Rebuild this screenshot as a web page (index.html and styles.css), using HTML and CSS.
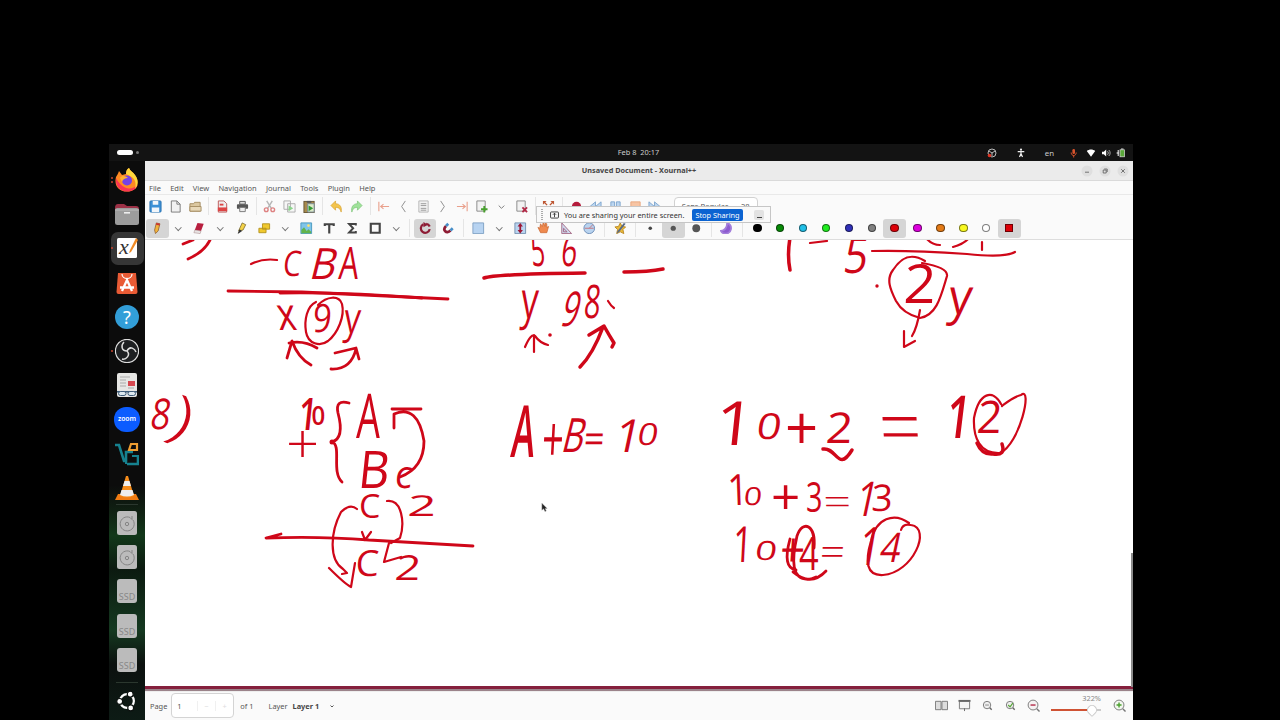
FILE: index.html
```html
<!DOCTYPE html>
<html lang="en">
<head>
    <meta charset="UTF-8">
    <meta name="viewport" content="width=device-width, initial-scale=1.0">
    <title>Unsaved Document - Xournal++</title>
    <link rel="stylesheet" href="styles.css">
</head>
<body>
    <div class="screen">
        <header class="topbar">
            <div class="workspace"><i class="pill"></i><i class="dot"></i></div>
            <div class="clock">Feb 8&nbsp; 20:17</div>
            <div class="tray">
                <svg class="tray-obs" viewBox="0 0 10 10"><circle cx="5" cy="5" r="4" fill="none" stroke="#bbb"/><path d="M5 5L2 3M5 5L8 3M5 5v3" stroke="#bbb"/><circle cx="2.5" cy="7.5" r="1.8" fill="#d32"/></svg>
                <svg class="tray-access" viewBox="0 0 10 10"><circle cx="5" cy="1.7" r="1.1" fill="#eee"/><path d="M1.7 3.7h6.6M5 3.5v3M5 5.5L3.5 9M5 5.5L6.5 9" stroke="#eee" stroke-width="1.2"/></svg>
                <span class="lang">en</span>
                <svg class="tray-mic" viewBox="0 0 10 10"><rect x="3.4" y="1" width="2.6" height="5" rx="1.3" fill="#d9532c"/><path d="M2.2 4.5c0 4 5 4 5 0M4.7 7.5v2" fill="none" stroke="#d9532c"/></svg>
                <svg class="tray-wifi" viewBox="0 0 10 10"><path d="M.8 3C3.2 1 6.8 1 9.2 3L5 8.8z" fill="#fff"/></svg>
                <svg class="tray-volume" viewBox="0 0 10 10"><path d="M1 3.7h1.8L5.2 1.6v6.8L2.8 6.3H1z" fill="#fff"/><path d="M6.5 3.2c1 1 1 2.6 0 3.6M7.8 2c1.8 1.7 1.8 4.3 0 6" fill="none" stroke="#ccc" stroke-width=".8"/></svg>
                <svg class="tray-battery" viewBox="0 0 10 10"><path d="M2.2 2v6M.6 5h2" stroke="#fff"/><rect x="4" y="1.8" width="4.5" height="7" fill="#5aa83a" stroke="#ddd" stroke-width=".7"/><path d="M5 1h2.5" stroke="#ddd"/></svg>
            </div>
        </header>

        <div class="desktop">
            <nav class="dock">
                <div class="app running two"><svg viewBox="0 0 24 24"><path d="M14 0c1 3 4 4 6 7 6 8 1 16.500-8 16.500S-1 17 1 9c1-2 2-3 3-6l3 4 4-1c0-3 1-5 3-6z" fill="#ff8a22"/><path d="M1 10c-1 8 4 13.500 11 13.500 5 0 9-2 11-7-4 4-9 5-13 3S3 14 1 10z" fill="#fb3553"/><path d="M14 0c1 3 4 4 6 7 4 5 3 11 0 14 1-4 1-8-2-11-2-2-5-3-7-4 0-3 1-5 3-6z" fill="#ffd83c"/><circle cx="12" cy="12.500" r="5" fill="#7542e5"/><path d="M5 10c2-3 6-2 8 0-3 0-5 1-6 4z" fill="#ffb130"/></svg></div>
                <div class="app"><svg viewBox="0 0 24 24"><path d="M0 6q0-4 3-4h6l3 2h9q3 0 3 3v5H0z" fill="#9c3146"/><rect y="6" width="24" height="17" rx="2.5" fill="#9c9c9c"/><path d="M0 8h24" stroke="#bbb"/><rect x="9" y="10" width="6" height="1.6" fill="#eee"/></svg></div>
                <div class="app running active"><svg viewBox="0 0 24 24"><rect x="2" y="2" width="20" height="20" rx="1.5" fill="#fff"/><text x="4" y="18" class="xicon">x</text><path d="M21 2l2 2-7 12-2 1 1-3z" fill="#f08a24"/></svg></div>
                <div class="app"><svg viewBox="0 0 24 24"><path d="M3 2h18l1.5 19q0 2-2 2h-17q-2 0-2-2z" fill="#e95b35"/><path d="M7 3c0 6 10 6 10 0" fill="none" stroke="#fff" stroke-width="1.2"/><path d="M7 20l5-11 5 11M5 16.5h14" fill="none" stroke="#fff" stroke-width="2.3"/></svg></div>
                <div class="app"><svg viewBox="0 0 24 24"><circle cx="12" cy="12" r="12" fill="#329ed8"/><text x="12" y="18.5" class="help">?</text></svg></div>
                <div class="app running"><svg viewBox="0 0 24 24"><circle cx="12" cy="12" r="11.6" fill="#1e2022" stroke="#ddd" stroke-width="1.2"/><path d="M12 12C6 12 6 6 9 3M12 12c3-6 8-2 9 1M12 12c4 4-1 9-5 8" fill="none" stroke="#ddd" stroke-width="1.5"/></svg></div>
                <div class="app"><svg viewBox="0 0 24 24"><rect x="2" width="20" height="24" rx="2" fill="#e6e6e4"/><path d="M5 4h10M5 7h6M5 10h6M5 13h6M13 15h6" stroke="#aaa"/><rect x="13" y="8" width="7" height="5" fill="#d64850"/><path d="M2 18h20v1.500H2z" fill="#3f5d7a"/><rect x="3.500" y="18.5" width="7.500" height="4" rx="2" fill="#dde8ee" stroke="#3f5d7a"/><rect x="13" y="18.5" width="7.500" height="4" rx="2" fill="#dde8ee" stroke="#3f5d7a"/></svg></div>
                <div class="app"><div class="zoom-logo">zoom</div></div>
                <div class="app"><svg viewBox="0 0 24 24"><path d="M0 3h4l5 16h2V10h7M23 13v9H12" fill="none" stroke="#16818f" stroke-width="2.6"/><path d="M17 14h6v8M11 19v3" fill="none" stroke="#16818f" stroke-width="2"/><path d="M14 8l2-6h6v6z" fill="none" stroke="#ee9d31" stroke-width="2.2"/></svg></div>
                <div class="app"><svg viewBox="0 0 24 24"><path d="M3 18h18l3 6H0z" fill="#f07c13"/><path d="M11 0h2l6 20q-7 3-14 0z" fill="#f58c1b"/><path d="M9.5 5h5l1.5 5H8zM6.5 14h11l1.5 5q-7 3-14 0z" fill="#eee"/></svg></div>
                <hr>
                <div class="app"><svg viewBox="0 0 24 24"><rect x="2" width="20" height="24" rx="2.5" fill="#bbb"/><path d="M18 9a7 7 0 1 1-3-2.5l2 2V5" fill="none" stroke="#858585"/><circle cx="12" cy="13" r="1.7" fill="none" stroke="#858585"/></svg></div>
                <div class="app"><svg viewBox="0 0 24 24"><rect x="2" width="20" height="24" rx="2.5" fill="#bbb"/><path d="M18 9a7 7 0 1 1-3-2.5l2 2V5" fill="none" stroke="#858585"/><circle cx="12" cy="13" r="1.7" fill="none" stroke="#858585"/></svg></div>
                <div class="app"><div class="ssd">SSD</div></div>
                <div class="app"><div class="ssd">SSD</div></div>
                <div class="app"><div class="ssd">SSD</div></div>
                <hr class="last">
                <div class="app ubuntu"><svg viewBox="0 0 24 24"><circle cx="12" cy="12" r="7.5" fill="none" stroke="#fff" stroke-width="2.4"/><g fill="#fff" stroke="#0c110f" stroke-width="1.3"><circle cx="4" cy="12.5" r="3.2"/><circle cx="15.5" cy="4.5" r="3.2"/><circle cx="16" cy="19.5" r="3.2"/></g></svg></div>
            </nav>

            <main class="window">
                <div class="titlebar">
                    <div class="title">Unsaved Document - Xournal++</div>
                    <div class="win-buttons">
                        <svg viewBox="0 0 12 12"><circle cx="6" cy="6" r="5.5"/><path d="M4 7.2h4"/></svg>
                        <svg viewBox="0 0 12 12"><circle cx="6" cy="6" r="5.5"/><path d="M4.2 5h3v3h-3zM5.2 4h3v3"/></svg>
                        <svg viewBox="0 0 12 12"><circle cx="6" cy="6" r="5.5"/><path d="M4.2 4.2l3.6 3.6M7.8 4.2L4.2 7.8"/></svg>
                    </div>
                </div>

                <div class="menubar">
                    <span>File</span><span>Edit</span><span>View</span><span>Navigation</span><span>Journal</span><span>Tools</span><span>Plugin</span><span>Help</span>
                </div>

                <div class="toolbar main-tools">
                    <b><svg viewBox="0 0 14 14"><rect x="1" y="1" width="12" height="12" rx="1" fill="#3d91d6" stroke="#2871b0"/><path d="M4 1h6v4H4zM3 8h8v5H3z" fill="#f2f6fa"/></svg></b>
                    <b><svg viewBox="0 0 14 14"><path d="M2.5 1h6l3.5 3.5V13h-9.500z" fill="#f1f1f1" stroke="#777"/><path d="M8.500 1v3.500H12" fill="none" stroke="#777"/></svg></b>
                    <b><svg viewBox="0 0 14 14"><path d="M1 12V4h4l1-1.500h6V12z" fill="#dcc8a0" stroke="#a58c61"/><path d="M1 12V7h12v5z" fill="#e8d8b8" stroke="#a58c61"/></svg></b>
                    <i class="sep"></i>
                    <b><svg viewBox="0 0 14 14"><path d="M2.500 1h6l3 3v9h-9z" fill="#eee" stroke="#b55"/><path d="M2 8h10v4H2z" fill="#d44"/><path d="M4 4h4v2H4z" fill="#d44"/></svg></b>
                    <b><svg viewBox="0 0 14 14"><path d="M4 1.500h6v3H4z" fill="#ddd" stroke="#555"/><rect x="1" y="4.500" width="12" height="5" rx="1" fill="#555"/><path d="M4 8h6v4.500H4z" fill="#eee" stroke="#777"/></svg></b>
                    <i class="sep"></i>
                    <b><svg class="faded" viewBox="0 0 14 14"><path d="M4 1l5 8M10 1L5 9" stroke="#888" stroke-width="1.500"/><circle cx="3.500" cy="10.500" r="2" fill="none" stroke="#c33" stroke-width="1.500"/><circle cx="10.500" cy="10.500" r="2" fill="none" stroke="#c33" stroke-width="1.500"/></svg></b>
                    <b><svg class="faded" viewBox="0 0 14 14"><path d="M1 1h7v9H1zM5 4h8v9H5z" fill="#f5f5f5" stroke="#777"/><path d="M6 6l5 3-5 3z" fill="#4b4"/></svg></b>
                    <b><svg viewBox="0 0 14 14"><rect x="1" y="1.500" width="11" height="12" fill="#a88b4c" stroke="#665534"/><path d="M4 1h5v2H4z" fill="#555"/><path d="M5 4h7v9H5z" fill="#dceac7" stroke="#789"/><path d="M6 6l5 3-5 3z" fill="#393"/></svg></b>
                    <i class="sep"></i>
                    <b><svg viewBox="0 0 14 14"><path d="M1 6l5-5v3c5 0 7 4 6 9-1-4-3-5-6-5v3z" fill="#f3c44d" stroke="#d59e27" stroke-width=".7"/></svg></b>
                    <b><svg viewBox="0 0 14 14"><path d="M13 6L8 1v3c-5 0-7 4-6 9 1-4 3-5 6-5v3z" fill="#9fe29a" stroke="#74c06f" stroke-width=".7"/></svg></b>
                    <i class="sep"></i>
                    <b><svg viewBox="0 0 14 14"><path d="M2 2v10M13 7H4M7 4.500L4 7l3 2.500" fill="none" stroke="#e9a08c" stroke-width="1.200"/></svg></b>
                    <b><svg viewBox="0 0 14 14"><path d="M9 1L5 7l4 6" fill="none" stroke="#888"/></svg></b>
                    <b><svg class="faded" viewBox="0 0 14 14"><path d="M2 1h10v12H2z" fill="#eee" stroke="#888"/><path d="M4 4h6M4 6h6M4 9h6M4 11h6" stroke="#555"/></svg></b>
                    <b><svg viewBox="0 0 14 14"><path d="M5 1l4 6-4 6" fill="none" stroke="#888"/></svg></b>
                    <b><svg viewBox="0 0 14 14"><path d="M12 2v10M1 7h9M7 4.500L10 7 7 9.500" fill="none" stroke="#e9a08c" stroke-width="1.200"/></svg></b>
                    <b><svg viewBox="0 0 14 14"><path d="M2 1h9v11H2z" fill="#f2f2f2" stroke="#888"/><path d="M10 6.500v7M6.500 10h7" stroke="#47a02c" stroke-width="2"/></svg></b>
                    <b><svg viewBox="0 0 14 14"><path d="M4 6l3 3 3-3" fill="none" stroke="#777"/></svg></b>
                    <b><svg viewBox="0 0 14 14"><path d="M2 1h9v11H2z" fill="#f2f2f2" stroke="#888"/><path d="M8 8l5 5M13 8l-5 5" stroke="#b22846" stroke-width="2"/></svg></b>
                    <i class="sep"></i>
                    <b><svg viewBox="0 0 14 14"><path d="M1 1h4L3.500 2.500 6 5 5 6 2.500 3.500 1 5zM13 1H9l1.500 1.500L8 5l1 1 2.500-2.500L13 5zM1 13h4L2.500 10.500 1 9zM13 13H9l2.500-2.500L13 9z" fill="#bd5632"/></svg></b>
                    <i class="sep"></i>
                    <b><svg viewBox="0 0 14 14"><circle cx="7" cy="7" r="5" fill="#b51c3c"/></svg></b>
                    <b><svg viewBox="0 0 14 14"><path d="M7 2v10L1 7zM13 2v10L7 7z" fill="#bcd6f0" stroke="#7fa6ce"/></svg></b>
                    <b><svg viewBox="0 0 14 14"><path d="M2 2h4v10H2zM8 2h4v10H8z" fill="#bcd6f0" stroke="#7fa6ce"/></svg></b>
                    <b><svg viewBox="0 0 14 14"><path d="M2 2h10v10H2z" fill="#f7c4a3" stroke="#e9a77d"/></svg></b>
                    <b><svg viewBox="0 0 14 14"><path d="M1 2v10l6-5zM7 2v10l6-5z" fill="#bcd6f0" stroke="#7fa6ce"/></svg></b>
                    <div class="font-button"><span>Sans Regular</span><span>28</span></div>
                </div>

                <div class="toolbar pen-tools">
                    <b class="on"><svg viewBox="0 0 14 14"><path d="M6 1l4 1-2 8-3 3-1-4z" fill="#f2b33c" stroke="#86572a" stroke-width=".8"/><path d="M6 1l4 1-.5 2-4-1z" fill="#c33"/></svg></b>
                    <i class="chev"></i>
                    <b><svg viewBox="0 0 14 14"><path d="M5 1l7 1-3 8-7-1z" fill="#b81f3f"/><path d="M2 9l7 1-1 3-7-1z" fill="#e9e4e4" stroke="#977" stroke-width=".5"/></svg></b>
                    <i class="chev"></i>
                    <b><svg viewBox="0 0 14 14"><path d="M8 1l4 2-3 6-5 1z" fill="#f4d247" stroke="#6b5a22" stroke-width=".8"/><path d="M5 8l3 2-4 3H3z" fill="#333"/></svg></b>
                    <b><svg viewBox="0 0 14 14"><path d="M5 2h8v6H5zM1 7h8v5H1z" fill="#f0c92e" stroke="#b3901c"/></svg></b>
                    <i class="chev"></i>
                    <b><svg viewBox="0 0 14 14"><path d="M1 1h12v12H1z" fill="#7fc5ea" stroke="#4596bd"/><path d="M1.500 12.500V9l3-3 3 4 2-2 3 3v1.500z" fill="#62b44b"/><circle cx="9.500" cy="4" r="1.500" fill="#ffe36c"/></svg></b>
                    <b><svg viewBox="0 0 14 14"><path d="M2 4.500V2.500h10v2M7 2.500V13" fill="none" stroke="#444" stroke-width="2.400"/></svg></b>
                    <b><svg viewBox="0 0 14 14"><path d="M11 4V2.200H3.500L8 7l-4.500 4.800H11V10" fill="none" stroke="#444" stroke-width="2.200"/></svg></b>
                    <b><svg viewBox="0 0 14 14"><path d="M2 2h10v10H2z" fill="none" stroke="#444" stroke-width="2.400"/></svg></b>
                    <i class="chev"></i>
                    <i class="sep"></i>
                    <b class="on"><svg viewBox="0 0 14 14"><path d="M5 2.500A5 5 0 1 0 12 8M8 2a5 5 0 0 1 4 3" fill="none" stroke="#8e1c35" stroke-width="2.500"/><path d="M5 0v6l5-3z" fill="#8e1c35"/></svg></b>
                    <b><svg viewBox="0 0 14 14"><path d="M4.500 4.500C0 9 5 14 9.500 9.500" fill="none" stroke="#8e1c35" stroke-width="3"/><path d="M4.500 4.500l2.500-2.500M9.500 9.500L12 7" stroke="#468ec8" stroke-width="3"/></svg></b>
                    <i class="sep"></i>
                    <b><svg viewBox="0 0 14 14"><path d="M1 1h12v12H1z" fill="#b7d3f1" stroke="#7c9ec2"/></svg></b>
                    <i class="chev"></i>
                    <b><svg viewBox="0 0 14 14"><path d="M1 1h12v12H1z" fill="#b9d4f0" stroke="#6f8bad"/><path d="M7 1l3 4H8v4h2l-3 4-3-4h2V5H4z" fill="#9c1835"/></svg></b>
                    <b><svg viewBox="0 0 14 14"><path d="M3 7L1 6l3 6h7l2-7-2 1V2L9 1v4L7 0 6 5 4 2z" fill="#ef8a4f" stroke="#c6602a" stroke-width=".7"/></svg></b>
                    <b><svg viewBox="0 0 14 14"><path d="M2 1v12h11zM4 7v4h4z" fill="#cfdcf0" stroke="#a0607e"/></svg></b>
                    <b><svg viewBox="0 0 14 14"><circle cx="7" cy="7" r="6" fill="#b9d4f0" stroke="#6889b5"/><path d="M2 7h10M7 7l4-4" stroke="#c76f77"/></svg></b>
                    <i class="sep"></i>
                    <b><svg viewBox="0 0 14 14"><path d="M7 1l2 4 4 .5-3 3 1 4.500-4-2-4 2 1-4.500-3-3L5 5z" fill="#e9b93a" stroke="#b88620"/><path d="M11 1L4 10l-1 3 3-2 7-9z" fill="#586a86"/></svg></b>
                    <i class="sep"></i>
                    <b><svg viewBox="0 0 14 14"><circle cx="7" cy="7" r="2" fill="#444"/></svg></b>
                    <b class="on"><svg viewBox="0 0 14 14"><circle cx="7" cy="7" r="2.900" fill="#555"/></svg></b>
                    <b><svg viewBox="0 0 14 14"><circle cx="7" cy="7" r="4.400" fill="#555"/></svg></b>
                    <i class="sep"></i>
                    <b><svg viewBox="0 0 14 14"><path d="M8 1c7 3 5 12-2 12-2 0-4-1-5-3 4 0 7-4 7-9z" fill="#8d5bd0" stroke="#a37edb" stroke-width="2"/></svg></b>
                    <i class="sep"></i>
                    <b><i class="color black"></i></b>
                    <b><i class="color green"></i></b>
                    <b><i class="color cyan"></i></b>
                    <b><i class="color lime"></i></b>
                    <b><i class="color blue"></i></b>
                    <b><i class="color gray"></i></b>
                    <b class="on"><i class="color red"></i></b>
                    <b><i class="color magenta"></i></b>
                    <b><i class="color orange"></i></b>
                    <b><i class="color yellow"></i></b>
                    <b><i class="color white"></i></b>
                    <b class="on"><i class="color red square"></i></b>

                    <div class="share-bar">
                        <i class="grip"></i>
                        <svg viewBox="0 0 10 8"><rect x=".6" y=".6" width="8.800" height="6.800" rx="1" fill="none" stroke="#333"/><path d="M5 6.300V2M3.300 3.700L5 2l1.700 1.700" fill="none" stroke="#333"/></svg>
                        <span>You are sharing your entire screen.</span>
                        <button>Stop Sharing</button>
                        <i class="minimize"></i>
                    </div>
                </div>

                <div class="canvas">
                    <!-- page ink: user space equals screen space -->
                    <svg class="ink" viewBox="145 240 988 446">
                        <!-- exercise 7, first column -->
                        <path d="M183 244l10-4M188 259q16-7 22-19" class="wide"/>
                        <path d="M251 264q12-6 26-4"/>
                        <text transform="translate(282 276) skewX(-6) scale(.72 .88)">C</text>
                        <text transform="translate(308 279) skewX(-14) scale(1 1.08)">B</text>
                        <text transform="translate(338 279) skewX(-5) scale(.78 1.12)">A</text>
                        <path d="M228 291l74 1 146 7" class="wide"/><path d="M280 293q70-1 142 5" class="wide"/>
                        <text transform="translate(279 330) skewX(8) scale(.9 1.15)">x</text>
                        <text transform="translate(312 332) skewX(-4) scale(.82 .98)">9</text>
                        <text transform="translate(343 333) skewX(-5) scale(.82 1.06)">y</text>
                        <path d="M316 302c-9 4-12 18-10 30 2 12 14 15 22 9 10-8 17-25 14-37-3-9-15-8-24 1"/>
                        <path d="M311 365q-13-7-19-24l-5 17M289 343q15-3 28 5" class="wide"/>
                        <path d="M331 369q20 1 25-20M335 353l21-5 3 11" class="wide"/>

                        <!-- exercise 7, second column -->
                        <text transform="translate(532 266) skewX(5) scale(.62 1.1)">5</text>
                        <text transform="translate(560 266) skewX(-6) scale(.7 1.1)">6</text>
                        <path d="M484 278q12-4 101-5" class="heavy"/>
                        <path d="M624 272q25 0 39-3" class="heavy"/>
                        <text transform="translate(520 318) skewX(-4) scale(.86 1.28)">y</text>
                        <text transform="translate(559 326) skewX(-14) scale(.75 1.2)">9</text>
                        <text transform="translate(583 318) skewX(-5) scale(.72 1.16)">8</text>
                        <path d="M608 301q3 5 6 7"/><circle cx="550" cy="335" r="1.800" class="dot"/>
                        <path d="M534 352v-17M525 347q6-14 10-11 5 7 13 9"/>
                        <path d="M580 367q13-13 23-40M589 335l15-9q5 9 10 17l-2 4" class="heavy"/>

                        <!-- exercise 7, third column -->
                        <path d="M790 238q-3 17 0 32" class="heavy"/><path d="M810 243l17-2"/>
                        <text transform="translate(842 273) skewX(-8) scale(1.050 1.25)">5</text>
                        <path d="M926 238q6 7 14 7M953 247q11-3 16-9M982 242v8"/>
                        <path d="M872 251q38-1 95 3 38 4 48-2"/>
                        <text transform="translate(903 303) skewX(-3) scale(1.4 1.35)">2</text>
                        <path d="M925 261c-13-8-23-5-32 9-7 9-3 19 3 31 6 11 16 15 24 17 17-3 21-22 27-42 1-7-13-11-25-13" />
                        <path d="M920 310q-3 18-8 26M904 331l0 16 11-6"/>
                        <circle cx="877" cy="286" r="1.700" class="dot"/>
                        <text transform="translate(947 314) skewX(-7) scale(1.16 1.24)">y</text>

                        <!-- exercise 8, column sum -->
                        <text transform="translate(149 429) skewX(-9) scale(.86 1.06)">8</text>
                        <text transform="translate(164 432) rotate(22) scale(2.100 1.450)" class="thin">)</text>
                        <text transform="translate(297 430) skewX(-6) scale(.8 1.120)" class="bold">1</text>
                        <text transform="translate(311.500 425) scale(.6 .67)" class="bold">0</text>
                        <text transform="translate(286 463) scale(1.450 1.400)" class="thin">+</text>
                        <path d="M349 403q-14-4-11 10c4 15 4 26-6 29 10 3-1 30 10 40" class="wide"/>
                        <circle cx="332" cy="442" r="2.500" class="dot"/>
                        <text transform="translate(356 438) skewX(-2) scale(.94 1.540)">A</text>
                        <text transform="translate(357 488) skewX(-6) scale(1.200 1.300)">B</text>
                        <path d="M394 428v-14q24-10 30 27 0 27-24 36M392 409h29" class="wide"/>
                        <text transform="translate(394 488) skewX(-6) scale(.9 .96)">c</text>
                        <text transform="translate(359 518) scale(.85 .8)">C</text>
                        <text transform="translate(407 516) skewX(-4) scale(1.250 .72)">2</text>
                        <path d="M387 501c15-2 18 22 13 37l-9 5M389 543l-5 19 17-5"/>
                        <path d="M357 509q-7-6-16 3c-11 21-12 48 2 57l4 4-5 1M329 568q16 16 22 19l4-24"/>
                        <path d="M362 532l3 8 6-8M365 540h4"/>
                        <path d="M281 534l-15 4q54-2 103 2l104 6" class="wide"/>
                        <text transform="translate(355 576) skewX(-3) scale(.93 .9)">C</text>
                        <text transform="translate(394 580) skewX(-6) scale(1.120 .86)">2</text>

                        <!-- A + B = 10 -->
                        <text transform="translate(510 457) skewX(-5) scale(.88 1.800)" class="bold">A</text>
                        <text transform="translate(541 462) skewX(-3) scale(.95 1.600)">+</text>
                        <text transform="translate(560 452) skewX(-14) scale(.84 1.180)">B</text>
                        <text transform="translate(583 453) skewX(-4) scale(.9 1)">=</text>
                        <text transform="translate(612 452) skewX(-12) scale(1.150 1.140)">1</text>
                        <text transform="translate(636 445) skewX(-10) scale(.9 .76)">0</text>

                        <!-- 10 + 2 = 12 -->
                        <text transform="translate(713 445) skewX(-6) scale(1.700 1.520)">1</text>
                        <text transform="translate(755 439) skewX(-9) scale(1.080 .9)">0</text>
                        <text transform="translate(785 450) scale(1.450 1.500)">+</text>
                        <text transform="translate(825 443) skewX(-5) scale(1.160 1.060)">2</text>
                        <path d="M823 449c14-2 15 24 29 1" class="heavy"/>
                        <text transform="translate(881 455) skewX(4) scale(1.850 2)" class="thin">=</text>
                        <text transform="translate(944 438) skewX(-7) scale(1.050 1.480)" class="bold">1</text>
                        <text transform="translate(976 433) skewX(-5) scale(1.080 1.120)">2</text>
                        <path d="M1001 404c-8-15-22-12-27 14-1 20 6 36 26 35 20-9 33-68 21-58-8 2-15 8-19 11"/>
                        <path d="M977 443q5 12 16 11 13 2 9-10" class="heavy"/>

                        <!-- 10 + 3 = 13 -->
                        <text transform="translate(728 505) skewX(2) scale(.9 1.080)">1</text>
                        <text transform="translate(743 505) skewX(-6) scale(.8 .62)">0</text>
                        <text transform="translate(771 515) scale(1.280 1.240)">+</text>
                        <text transform="translate(806 512) scale(.72 1.040)">3</text>
                        <text transform="translate(824 515) skewX(3) scale(1.220 .95)" class="thin">=</text>
                        <text transform="translate(853 516) skewX(-12) scale(.95 1.200)">1</text>
                        <text transform="translate(871 511) skewX(-3) scale(.92 .92)">3</text>

                        <!-- 10 + 4 = 14 -->
                        <text transform="translate(732 562) skewX(-3) scale(.85 1.240)">1</text>
                        <text transform="translate(754 560) skewX(-8) scale(.96 .66)">0</text>
                        <text transform="translate(779 567) skewX(-4) scale(1.100 1.200)">+</text>
                        <text transform="translate(799 570) scale(.86 1.120)">4</text>
                        <text transform="translate(819 566) skewX(-4) scale(1.100 1)" class="thin">=</text>
                        <text transform="translate(856 565) skewX(-10) scale(.95 1.320)">1</text>
                        <text transform="translate(878 562) skewX(-12) scale(.9 1.020)">4</text>
                        <path d="M814 548c2-23-11-29-17-12-5 22-7 46 14 43l5-2M790 539q-8 29 6 31M793 572q18 15 33-1" class="wide"/>
                        <path d="M909 523c-15-11-33-5-38 18-6 20-5 35 12 34 30-2 49-47 28-50q-8-2-10 5"/>
                    </svg>
                    <svg class="pointer" viewBox="0 0 8 10"><path d="M1 0v8l2-1.500L4.500 9.500 6 9 4.700 6H7z" fill="#222" stroke="#aaa" stroke-width=".5"/></svg>
                    <i class="scroll-thumb"></i>
                </div>

                <footer class="statusbar">
                    <span>Page</span>
                    <div class="page-input"><span>1</span><i>−</i><i>+</i></div>
                    <span class="page-total">of 1</span>
                    <span class="layer-label">Layer</span><strong>Layer 1</strong>
                    <svg class="layer-arrow" viewBox="0 0 6 6"><path d="M1.500 2.500L3 4l1.500-1.500" fill="none" stroke="#555"/></svg>
                    <div class="view-tools">
                        <svg viewBox="0 0 14 14"><path d="M.5 2.500h6v9h-6zM7.500 2.500h6v9h-6z" fill="#ddd" stroke="#777"/></svg>
                        <svg viewBox="0 0 14 14"><path d="M1.500 2.500h11v8h-11z" fill="#f4f4f4" stroke="#777"/><path d="M.5 2h13" stroke="#666" stroke-width="2"/><path d="M7 10v3" stroke="#666"/></svg>
                        <svg viewBox="0 0 14 14"><circle cx="6.500" cy="6.500" r="4" fill="#eee" stroke="#777"/><path d="M9.500 9.500l2 2" stroke="#666" stroke-width="1.500"/><path d="M4.500 6.500h4" stroke="#888"/></svg>
                        <svg viewBox="0 0 14 14"><circle cx="6.500" cy="6.500" r="4" fill="#eee" stroke="#777"/><path d="M9.500 9.500l2 2" stroke="#666" stroke-width="1.500"/><path d="M4.500 6.500l2 2 3-4" fill="none" stroke="#56a536" stroke-width="1.300"/></svg>
                        <svg viewBox="0 0 14 14"><circle cx="6.500" cy="6.500" r="5.300" fill="#f5f2f2" stroke="#777"/><path d="M10.500 10.500l3 3" stroke="#777" stroke-width="1.500"/><path d="M3.800 6.500h5.400" stroke="#b22846" stroke-width="1.500"/></svg>
                    </div>
                    <div class="zoom">
                        <span>322%</span>
                        <div class="track"><i></i><b></b></div>
                    </div>
                    <svg class="zoom-in" viewBox="0 0 14 14"><circle cx="6.500" cy="6.500" r="5.300" fill="#f2f7ef" stroke="#777"/><path d="M10.500 10.500l3 3" stroke="#777" stroke-width="1.500"/><path d="M3.800 6.500h5.400M6.500 3.800v5.400" stroke="#49a02c" stroke-width="1.500"/></svg>
                </footer>
            </main>
        </div>
    </div>
</body>
</html>
```
FILE: styles.css
```css
* {
    box-sizing: border-box;
}
body {
    margin: 0;
    height: 720px;
    overflow: hidden;
    background: #000;
    font-family: "Noto Sans", sans-serif;
    font-size: 7.2px;
    color: #555;
}
svg {
    display: block;
    flex: none;
}
.screen {
    width: 1024px;
    height: 576px;
    margin: 144px 0 0 109px;
    display: flex;
    flex-direction: column;
}

/* top bar */
.topbar {
    height: 17px;
    flex: none;
    display: grid;
    grid-template-columns: 1fr auto 1fr;
    align-items: center;
    background: #131313;
    color: #ccc;
}
.workspace {
    display: flex;
    align-items: center;
    gap: 3px;
    padding-left: 8px;
}
.workspace .pill {
    width: 16px;
    height: 5px;
    border-radius: 3px;
    background: #fff;
}
.workspace .dot {
    width: 3px;
    height: 3px;
    border-radius: 50%;
    background: #777;
}
.clock {
    padding: 0 0 2px 35px;
    font-size: 7.4px;
}
.tray {
    display: flex;
    justify-content: flex-end;
    align-items: center;
    gap: 5px;
    padding-right: 7px;
}
.tray svg {
    width: 10px;
    height: 10px;
}
.tray .tray-obs { margin-right: 14px; }
.tray .tray-access { margin-right: 14px; }
.tray .lang {
    margin-right: 10px;
    font-size: 7.8px;
}
.tray .tray-mic { margin-right: 2px; }

/* dock */
.desktop {
    flex: 1;
    min-height: 0;
    display: flex;
}
.dock {
    width: 36px;
    padding-top: 2px;
    display: flex;
    flex-direction: column;
    background: linear-gradient(#0c0c0c 0 58%, #102213 63%, #12381a 67%, #0c1a10 73%, #153920 84%, #0c110f 90%, #0d1b15);
}
.app {
    height: 34.2px;
    flex: none;
    position: relative;
    display: flex;
    align-items: center;
    justify-content: center;
}
.app svg {
    width: 24px;
    height: 24px;
}
.app.active::before {
    content: "";
    position: absolute;
    inset: 1px 1px 1px 2px;
    border-radius: 7px;
    background: #363636;
}
.app.active svg {
    position: relative;
}
.app.running::after {
    content: "";
    position: absolute;
    left: 2px;
    top: 16px;
    width: 2px;
    height: 2px;
    border-radius: 50%;
    background: #c8452f;
}
.app.two::after {
    top: 14px;
    box-shadow: 0 4px #c8452f;
}
.xicon {
    font: italic 22px "Liberation Serif", serif;
    fill: #333;
}
.help {
    font-size: 18px;
    fill: #fff;
    text-anchor: middle;
}
.zoom-logo {
    width: 26px;
    height: 25px;
    border-radius: 12px;
    background: #0b5cff;
    color: #fff;
    font-size: 6.8px;
    font-weight: 600;
    line-height: 24px;
    text-align: center;
}
.ssd {
    width: 20px;
    height: 24px;
    border-radius: 3px;
    background: #bbb;
    color: #888;
    font-size: 9px;
    line-height: 35px;
    text-align: center;
    overflow: hidden;
}
.dock hr {
    width: 22px;
    height: 1px;
    margin: -1px auto 1px;
    flex: none;
    border: 0;
    background: #2b372e;
}
.dock hr.last {
    margin: 5px auto 1px;
}
.app.ubuntu svg {
    width: 22px;
    height: 22px;
}

/* window */
.window {
    width: 988px;
    display: flex;
    flex-direction: column;
    background: #fafafa;
}
.titlebar {
    height: 20px;
    flex: none;
    display: grid;
    grid-template-columns: 1fr auto 1fr;
    align-items: center;
    background: #ebebeb;
    border-bottom: 1px solid #dadada;
}
.title {
    grid-column: 2;
    padding-bottom: 1px;
    font-size: 7.3px;
    font-weight: 700;
    color: #444;
}
.win-buttons {
    display: flex;
    justify-content: flex-end;
    gap: 6px;
    padding-right: 4px;
}
.win-buttons svg {
    width: 12px;
    height: 12px;
    fill: #dfdfdf;
    stroke: none;
}
.win-buttons path {
    fill: none;
    stroke: #666;
    stroke-width: .9;
}
.menubar {
    height: 14px;
    flex: none;
    display: flex;
    align-items: center;
    gap: 9.2px;
    padding-left: 4px;
    border-bottom: 1px solid #e9e9e9;
    font-size: 7.5px;
}
.toolbar {
    flex: none;
    display: flex;
    align-items: center;
}
.toolbar b {
    flex: none;
    display: flex;
    align-items: center;
    justify-content: center;
}
.toolbar svg {
    width: 13px;
    height: 13px;
}
.toolbar svg.faded {
    opacity: .6;
}
.sep {
    flex: none;
    width: 7.7px;
    height: 18px;
    background: linear-gradient(#e5e5e5, #e5e5e5) center / 1px 100% no-repeat;
}
.main-tools {
    height: 22px;
    padding-left: 1px;
}
.main-tools b {
    width: 19.65px;
    height: 20px;
}
.font-button {
    width: 84px;
    height: 18px;
    margin-left: 9px;
    padding: 0 7px;
    display: flex;
    justify-content: space-between;
    align-items: center;
    border: 1px solid #d2d2d2;
    border-radius: 4px;
    background: #fff;
    font-size: 7.6px;
}
.pen-tools {
    height: 23px;
    padding-left: 1px;
    position: relative;
    border-bottom: 1px solid #ddd;
}
.pen-tools > b {
    width: 22.9px;
    height: 19px;
}
.pen-tools > b.on {
    border-radius: 3px;
    background: #d5d5d5;
}
.pen-tools svg {
    width: 12.5px;
    height: 12.5px;
}
.main-tools .sep {
    width: 7.9px;
}
.chev {
    flex: none;
    width: 19.2px;
    display: flex;
    justify-content: center;
}
.chev::before {
    content: "";
    width: 3.5px;
    height: 3.5px;
    margin-top: -2px;
    border: solid #777;
    border-width: 0 1px 1px 0;
    transform: rotate(45deg);
}
.color {
    width: 8.5px;
    height: 8.5px;
    border: 1px solid rgba(0, 0, 0, .5);
    border-radius: 50%;
}
.color.square { border-radius: 0; }
.black { background: #000; }
.green { background: #078a07; }
.cyan { background: #20bfe7; }
.lime { background: #20ec20; }
.blue { background: #3030b8; }
.gray { background: #808080; }
.red { background: #dc0008; }
.magenta { background: #dd00dd; }
.orange { background: #e37a16; }
.yellow { background: #f8f820; }
.white { background: #fff; }

/* screen sharing notice floats over both toolbars */
.share-bar {
    position: absolute;
    left: 391px;
    top: -11px;
    width: 235px;
    height: 17px;
    padding: 0 4px;
    display: flex;
    align-items: center;
    border: 1px solid #c6c6c6;
    background: #f9f9f9;
    color: #333;
    font-size: 7.35px;
    white-space: nowrap;
}
.share-bar .grip {
    width: 2px;
    height: 11px;
    margin-right: 7px;
    border-left: 1px dotted #aaa;
    border-right: 1px dotted #aaa;
}
.pen-tools .share-bar svg {
    width: 9px;
    height: 8px;
    margin-right: 5px;
}
.share-bar span {
    width: 121px;
}
.share-bar button {
    width: 51px;
    height: 12px;
    margin-left: 7px;
    padding: 0;
    border: 0;
    border-radius: 2px;
    background: #0b63d1;
    color: #fff;
    font: inherit;
    line-height: 12px;
}
.share-bar .minimize {
    width: 10px;
    height: 10px;
    margin-left: 11px;
    border-radius: 2px;
    background: linear-gradient(#444, #444) center 7px / 5px 1px no-repeat #e2e2e2;
}

/* page */
.canvas {
    height: 451px;
    flex: none;
    position: relative;
    overflow: hidden;
    background: #fff;
    border-bottom: 2px solid #9b838a;
    box-shadow: inset 0 -3px #85203d;
}
.ink {
    width: 988px;
    height: 446px;
    fill: none;
    stroke: #cf0719;
    stroke-width: 2.2;
    stroke-linecap: round;
    stroke-linejoin: round;
}
.ink text {
    font: 40px "Open Sans", sans-serif;
    fill: #cf0719;
    stroke: none;
}
.ink text.bold { font-weight: 600; }
.ink text.thin { font-weight: 300; }
.ink .dot { fill: #cf0719; stroke: none; }
.ink .wide { stroke-width: 2.8; }
.ink .heavy { stroke-width: 3.5; }
.pointer {
    position: absolute;
    left: 396px;
    top: 263px;
    width: 7px;
    height: 9px;
}
.scroll-thumb {
    position: absolute;
    right: 0;
    top: 313px;
    width: 2px;
    height: 134px;
    background: #8c8c8c;
}

/* status bar */
.statusbar {
    flex: 1;
    display: flex;
    align-items: center;
    padding: 0 0 1px 5px;
    border-top: 1px solid #eee;
    font-size: 7.4px;
}
.page-input {
    width: 63px;
    height: 25px;
    margin: 0 6px 0 4px;
    padding-left: 5px;
    display: flex;
    align-items: center;
    border: 1px solid #d4d4d4;
    border-radius: 4px;
    background: #fff;
}
.page-input span {
    width: 20px;
}
.page-input i {
    width: 19px;
    text-align: center;
    font-style: normal;
    color: #ddd;
    border-left: 1px solid #f0f0f0;
}
.layer-label {
    margin-left: 15px;
    padding-right: 5px;
}
.statusbar strong {
    color: #444;
}
.layer-arrow {
    width: 6px;
    height: 6px;
    margin-left: 10px;
}
.view-tools {
    margin-left: auto;
    display: flex;
    gap: 10px;
}
.view-tools svg,
.zoom-in {
    width: 13px;
    height: 13px;
}
.zoom {
    width: 50px;
    height: 26px;
    margin: 0 12px 0 11px;
    text-align: right;
    line-height: 10px;
    color: #888;
}
.track {
    position: relative;
    height: 2px;
    margin-top: 6px;
    background: #ccc;
}
.track i {
    display: block;
    width: 36px;
    height: 2px;
    background: #cf5233;
}
.track b {
    position: absolute;
    left: 36px;
    top: -4px;
    width: 10px;
    height: 10px;
    border: 1px solid #ccc;
    border-radius: 50% 50% 50% 10%;
    background: #fff;
    transform: rotate(-45deg);
}
.zoom-in {
    margin-right: 7px;
}
```
